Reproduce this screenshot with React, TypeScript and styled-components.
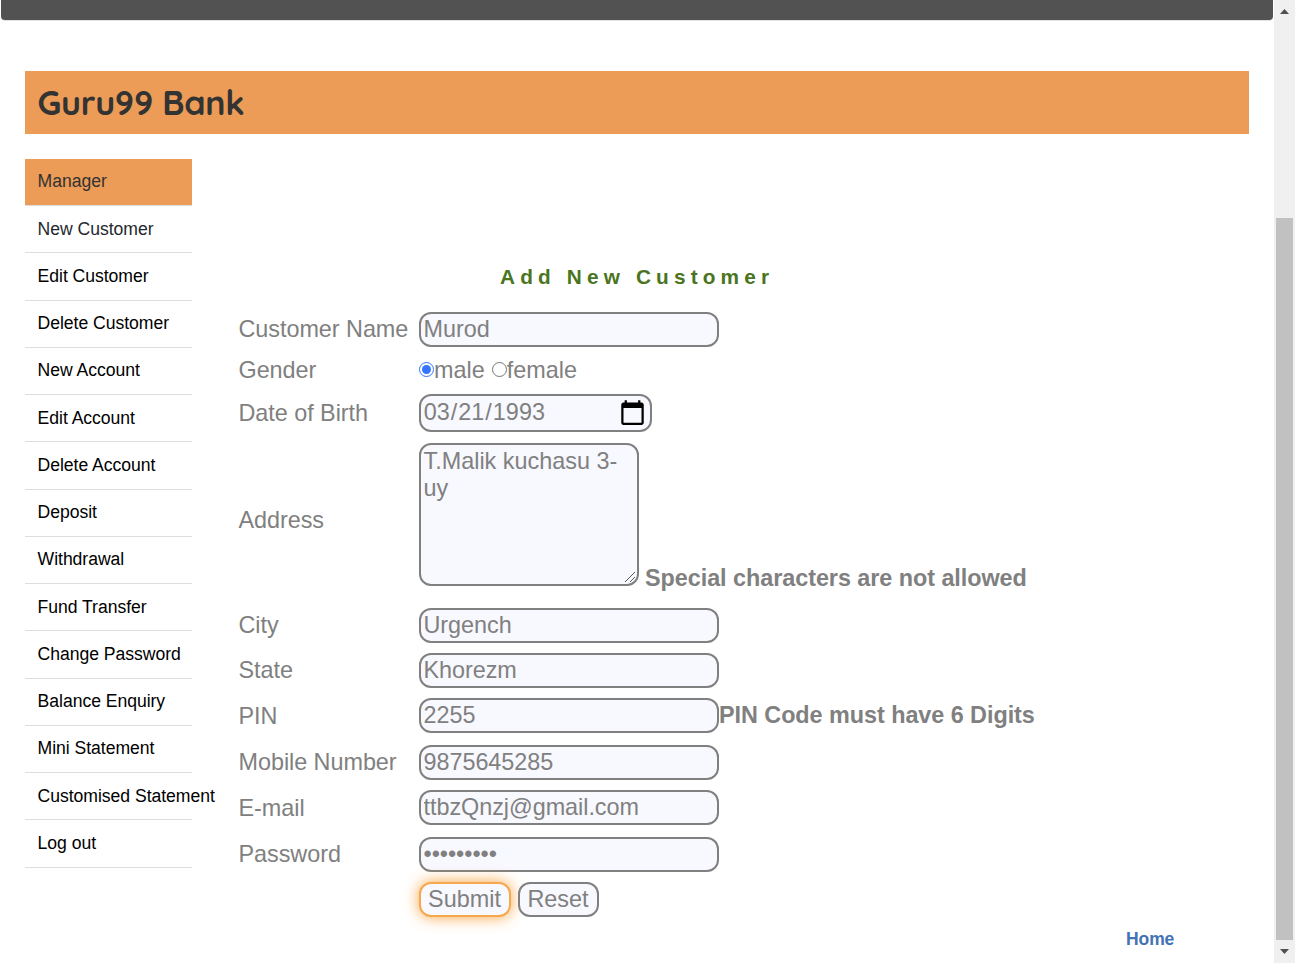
import React from "react";
import styled, { createGlobalStyle, css } from "styled-components";

const GlobalStyle = createGlobalStyle`
  * { box-sizing: border-box; }
  html, body { margin: 0; background: #fff; overflow: hidden; }
  body, input, textarea, button { font-family: "Liberation Sans", Arial, sans-serif; }
`;

const Window = styled.div`
  display: flex;
  width: 1295px;
  height: 963px;
  overflow: hidden;
`;
const Page = styled.main`
  display: flex;
  flex-direction: column;
  width: 1274px;
`;
const NavBar = styled.div`
  height: 20px;
  margin: 0 1px;
  flex: none;
  background: #525252;
  border-radius: 0 0 4px 4px;
  box-shadow: 0 1px 0 #e3e3e3;
`;
const Banner = styled.header`
  display: flex;
  align-items: center;
  flex: none;
  height: 63px;
  margin: 51px 25px 25px;
  padding: 0 12.6px;
  background: #ec9c56;
`;
const BankName = styled.h1`
  margin: 0;
  font: 700 34px/40px Quicksand, Lato, sans-serif;
  letter-spacing: -0.27px;
  color: #333;
  white-space: nowrap;
`;
const Columns = styled.div`
  display: flex;
  padding-left: 25px;
`;
const Menu = styled.ul`
  width: 167px;
  flex: none;
  margin: 0;
  padding: 0;
  list-style: none;
`;
const MenuItem = styled.li<{ $heading?: boolean; $visited?: boolean }>`
  height: 47.26px;
  padding: 11.5px 0 0 12.6px;
  border-bottom: 1px solid #ddd;
  font-size: 17.6px;
  line-height: 22px;
  letter-spacing: -0.04px;
  white-space: nowrap;
  color: ${(p) => (p.$heading ? "#333" : p.$visited ? "#23282d" : "#000")};
  ${(p) =>
    p.$heading &&
    css`
      height: 47.06px;
      padding-top: 11px;
      background: #ec9c56;
    `}
`;
const Content = styled.section`
  flex: 1;
  padding: 104px 0 0 47px;
`;
const FormTitle = styled.h2`
  margin: 0 0 21px 261px;
  font-size: 20.8px;
  line-height: 28px;
  font-weight: 700;
  letter-spacing: 5.15px;
  color: #4a7420;
`;
const Row = styled.div<{ $h: number; $gap: number }>`
  display: flex;
  align-items: center;
  height: ${(p) => p.$h}px;
  margin-bottom: ${(p) => p.$gap}px;
  color: #808080;
  font-size: 23.4px;
  line-height: 27px;
  white-space: nowrap;
`;
const Label = styled.label<{ $drop?: number }>`
  width: 180.5px;
  margin-left: -0.5px;
  flex: none;
  padding-top: ${(p) => p.$drop ?? 0}px;
  letter-spacing: -0.04px;
`;
const field = css`
  margin: 0;
  border: 2px solid #808080;
  border-radius: 12px;
  background: #f8f8ff;
  color: #808080;
  font-size: 23.4px;
  line-height: 27px;
  outline: none;
`;
const TextInput = styled.input`
  ${field}
  width: 300px;
  height: 35px;
  padding: 1px 2px 1px 2.5px;
  letter-spacing: -0.04px;
`;
const DateInput = styled.input`
  ${field}
  width: 233px;
  height: 38px;
  padding: 0 2px 2px 1.8px;
  &::-webkit-calendar-picker-indicator {
    width: 27px;
    height: 27px;
    padding: 0;
    margin: 0 2px 0 0;
    background-size: 27px 27px;
  }
`;
const AddressField = styled.div`
  position: relative;
  height: 143px;
`;
const AddressBox = styled.textarea`
  ${field}
  display: block;
  width: 220px;
  height: 143px;
  padding: 3px 2px 2px 2.5px;
  overflow: hidden;
  resize: none;
`;
const ResizeGrip = styled.svg`
  position: absolute;
  right: 3px;
  bottom: 3px;
  width: 12px;
  height: 12px;
  stroke: #555;
  stroke-width: 1;
`;
const Radio = styled.input`
  width: 15px;
  height: 15px;
  margin: 0 0 1px;
  accent-color: #3375ff;
`;
const RadioText = styled.span`
  margin-right: 7px;
`;
const Hint = styled.strong<{ $below?: boolean }>`
  letter-spacing: -0.05px;
  ${(p) => p.$below && "align-self: flex-end; margin: 0 0 -6px 6px;"}
`;
const Button = styled.button<{ $focused?: boolean; $w: number }>`
  ${field}
  width: ${(p) => p.$w}px;
  height: 35px;
  margin-right: 7px;
  padding: 0 1px 0 0;
  ${(p) =>
    p.$focused &&
    css`
      border-color: #f7a74d;
      box-shadow: 0 0 15px #f9a440;
    `}
`;
const HomeLink = styled.a`
  display: block;
  width: max-content;
  margin-left: 887px;
  color: #4373b2;
  font-size: 17.5px;
  line-height: 20px;
  font-weight: 700;
  letter-spacing: -0.1px;
`;
const ScrollBar = styled.aside`
  display: flex;
  flex-direction: column;
  align-items: center;
  width: 21px;
  background: #f0f0f0;
`;
const Arrow = styled.svg`
  display: block;
  flex: none;
  width: 9px;
  height: 5px;
  fill: #505050;
  &:first-child {
    margin-top: 9px;
  }
`;
const Thumb = styled.div`
  width: 17px;
  height: 722px;
  margin: 204px 0 9px;
  flex: none;
  background: #c1c1c1;
`;

const links = [
  "New Customer", "Edit Customer", "Delete Customer", "New Account", "Edit Account",
  "Delete Account", "Deposit", "Withdrawal", "Fund Transfer", "Change Password",
  "Balance Enquiry", "Mini Statement", "Customised Statement", "Log out",
];

const details = [
  { label: "City", value: "Urgench", gap: 10 },
  { label: "State", value: "Khorezm", gap: 10 },
  { label: "PIN", value: "2255", gap: 12, drop: 2, hint: "PIN Code must have 6 Digits" },
  { label: "Mobile Number", value: "9875645285", gap: 10 },
  { label: "E-mail", value: "ttbzQnzj@gmail.com", gap: 12, drop: 2 },
  { label: "Password", value: "abcdefghi", gap: 10, type: "password" },
];

export default function App() {
  return (
    <Window>
      <GlobalStyle />
      <Page>
        <NavBar />
        <Banner>
          <BankName>Guru99 Bank</BankName>
        </Banner>
        <Columns>
          <Menu>
            <MenuItem $heading>Manager</MenuItem>
            {links.map((l, i) => (
              <MenuItem key={l} $visited={i === 0}>{l}</MenuItem>
            ))}
          </Menu>
          <Content>
            <FormTitle>Add New Customer</FormTitle>
            <Row $h={35} $gap={6}>
              <Label>Customer Name</Label>
              <TextInput defaultValue="Murod" spellCheck={false} />
            </Row>
            <Row $h={34} $gap={7}>
              <Label>Gender</Label>
              <Radio type="radio" name="gender" defaultChecked />
              <RadioText>male</RadioText>
              <Radio type="radio" name="gender" />
              <RadioText>female</RadioText>
            </Row>
            <Row $h={38} $gap={11}>
              <Label>Date of Birth</Label>
              <DateInput type="date" defaultValue="1993-03-21" />
            </Row>
            <Row $h={143} $gap={22}>
              <Label $drop={12}>Address</Label>
              <AddressField>
                <AddressBox defaultValue="T.Malik kuchasu 3-uy" spellCheck={false} />
                <ResizeGrip viewBox="0 0 12 12"><path d="M1 11 11 1M6 11 11 6" /></ResizeGrip>
              </AddressField>
              <Hint $below>Special characters are not allowed</Hint>
            </Row>
            {details.map((d) => (
              <Row key={d.label} $h={35} $gap={d.gap}>
                <Label $drop={d.drop}>{d.label}</Label>
                <TextInput type={d.type ?? "text"} defaultValue={d.value} spellCheck={false} />
                {d.hint && <Hint>{d.hint}</Hint>}
              </Row>
            ))}
            <Row $h={35} $gap={12}>
              <Label />
              <Button $w={92} $focused>Submit</Button>
              <Button $w={81}>Reset</Button>
            </Row>
            <HomeLink>Home</HomeLink>
          </Content>
        </Columns>
      </Page>
      <ScrollBar>
        <Arrow viewBox="0 0 9 5"><path d="M4.5 0 9 5H0Z" /></Arrow>
        <Thumb />
        <Arrow viewBox="0 0 9 5"><path d="M0 0H9L4.5 5Z" /></Arrow>
      </ScrollBar>
    </Window>
  );
}
